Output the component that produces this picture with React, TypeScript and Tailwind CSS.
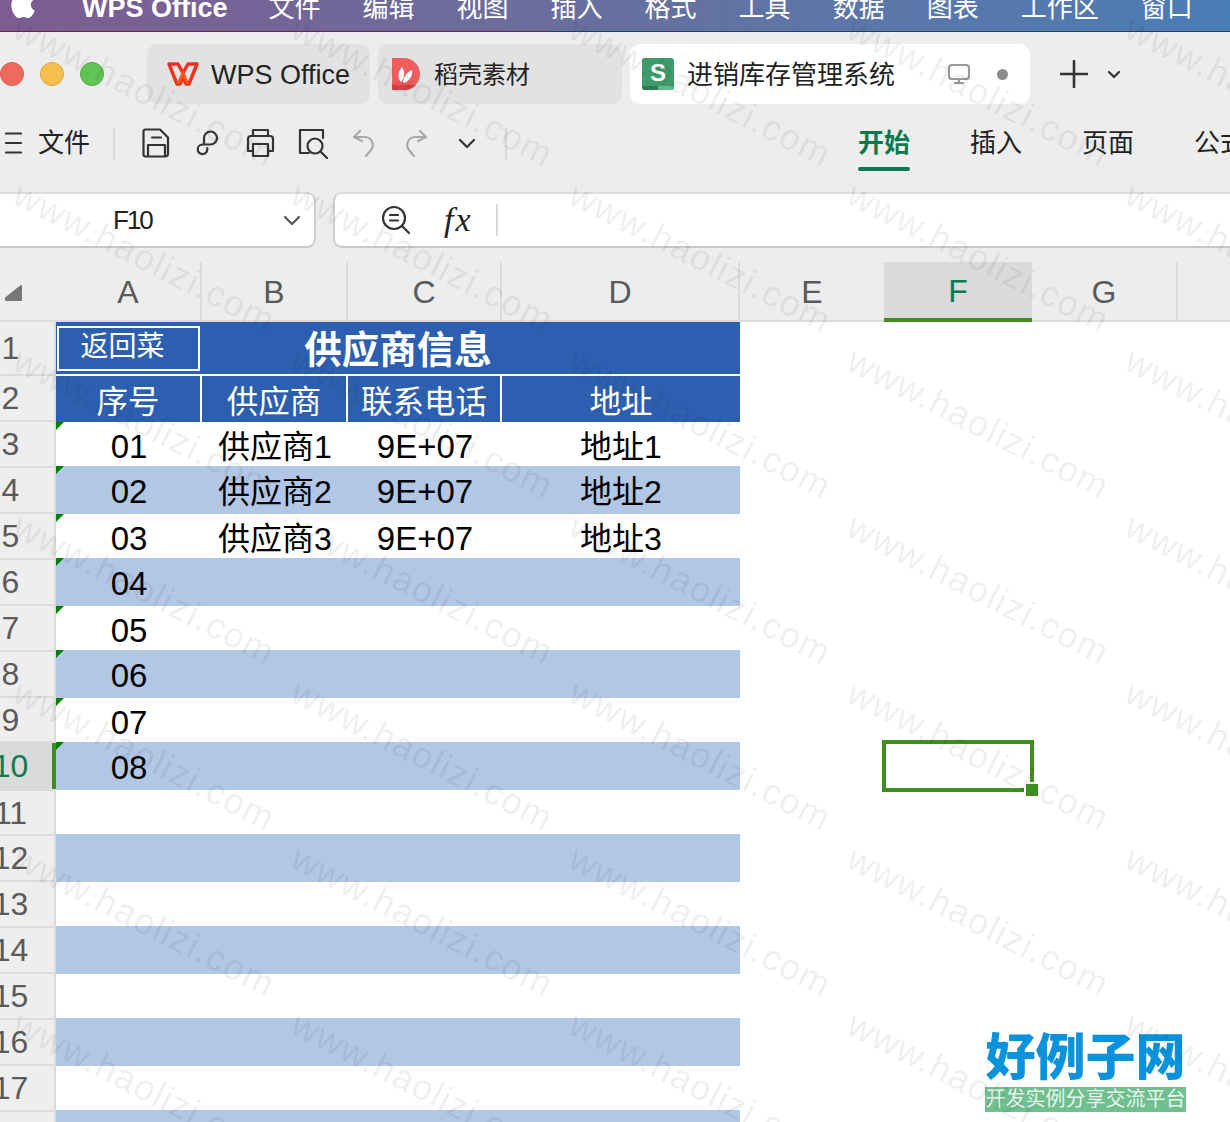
import React from 'react';
import { FaApple } from 'react-icons/fa';

const FONT = "font-['Liberation_Sans','Noto_Sans_CJK_SC',sans-serif]";

const MENUS = ['文件', '编辑', '视图', '插入', '格式', '工具', '数据', '图表', '工作区', '窗口'];

// column header cells: widths add up from x=56
const COLS = [
  { name: 'A', w: 146 },
  { name: 'B', w: 146 },
  { name: 'C', w: 154 },
  { name: 'D', w: 238 },
  { name: 'E', w: 144 },
  { name: 'F', w: 148 },
  { name: 'G', w: 146 },
  { name: '', w: 60 },
];

const ROW_HEADS = [
  { n: 1, h: 54 }, { n: 2, h: 46 }, { n: 3, h: 46 }, { n: 4, h: 46 }, { n: 5, h: 46 },
  { n: 6, h: 46 }, { n: 7, h: 46 }, { n: 8, h: 46 }, { n: 9, h: 45 }, { n: 10, h: 48 },
  { n: 11, h: 45 }, { n: 12, h: 46 }, { n: 13, h: 46 }, { n: 14, h: 46 }, { n: 15, h: 46 },
  { n: 16, h: 46 }, { n: 17, h: 46 }, { n: 18, h: 46 },
];

const DATA = [
  ['01', '供应商1', '9E+07', '地址1'],
  ['02', '供应商2', '9E+07', '地址2'],
  ['03', '供应商3', '9E+07', '地址3'],
  ['04', '', '', ''],
  ['05', '', '', ''],
  ['06', '', '', ''],
  ['07', '', '', ''],
  ['08', '', '', ''],
  ['', '', '', ''],
  ['', '', '', ''],
  ['', '', '', ''],
  ['', '', '', ''],
  ['', '', '', ''],
  ['', '', '', ''],
  ['', '', '', ''],
  ['', '', '', ''],
];

const WM_X = [24, 302, 580, 858, 1136];
const WM_Y = [10, 176, 342, 508, 674, 840, 1006];

function WpsLogo() {
  return (
    <svg width="32" height="24" viewBox="0 0 32 24" fill="none">
      <path d="M2 2h9l5 9 5-9h9l-8 20h-3l-3-7-3 7h-3L2 2Z" stroke="#f0301e" strokeWidth="3.4" strokeLinejoin="round" />
      <path d="M11 22l5-11 5 11" stroke="#f25a1a" strokeWidth="3" />
    </svg>
  );
}

function DaokeLogo() {
  return (
    <svg width="28" height="34" viewBox="0 0 28 34">
      <path d="M0 1h12a16 16 0 0 1 0 32H0Z" fill="#f05d5d" />
      <path d="M0 28h24a16 16 0 0 1-12 5H0Z" fill="#d93f40" />
      <path d="M9 25c-4-5-3-10 1-15 3 5 3 10-1 15Z" fill="#fff" />
      <path d="M11 26c0-6 4-11 9-13 1 6-3 12-9 13Z" fill="#fff" />
    </svg>
  );
}

function SheetLogo() {
  return (
    <div className="relative flex h-[32px] w-[32px] items-center justify-center overflow-hidden rounded-[3px] bg-[#3f9b6b]">
      <span className="pb-[3px] text-[24px] font-bold leading-none text-white">S</span>
      <div className="absolute bottom-0 left-0 h-[4px] w-[16px] bg-[#2f7c52]" />
      <div className="absolute bottom-0 right-0 h-[4px] w-[16px] bg-[#63b98a]" />
    </div>
  );
}

function ToolIcon({ w, h, color = '#333', children }: { w: number; h: number; color?: string; children: React.ReactNode }) {
  return (
    <svg width={w} height={h} viewBox={`0 0 ${w} ${h}`} fill="none" stroke={color} strokeWidth="2.2" strokeLinecap="round" strokeLinejoin="round">
      {children}
    </svg>
  );
}

function Toolbar() {
  return (
    <div className="mt-[15px] flex h-[52px] items-start">
      <div className="flex h-[48px] w-[858px] shrink-0 items-center">
        <div className="ml-[5px] w-[17px]">
          <ToolIcon w={17} h={22}>
            <path d="M1 1.5h15M1 11h15M1 20.5h15" />
          </ToolIcon>
        </div>
        <span className="ml-[16px] text-[26px] text-[#222]">文件</span>
        <div className="ml-[23px] h-[32px] w-[2px] bg-[#d8d8d8]" />
        <div className="ml-[27px]">
          <ToolIcon w={28} h={30}>
            <path d="M3 1.5h15l8 8V26a2.5 2.5 0 0 1-2.5 2.5h-20A2 2 0 0 1 1.5 26V3.5a2 2 0 0 1 1.5-2Z" />
            <path d="M10 9.5h9M6 28v-11h17v11" />
          </ToolIcon>
        </div>
        <div className="ml-[26px]">
          <ToolIcon w={25} h={26}>
            <path d="M8 13V8a6.5 6.5 0 1 1 6.5 6.5H6.5a4.8 4.8 0 1 0 0 9.6 4.8 4.8 0 0 0 4.8-4.8V18" />
          </ToolIcon>
        </div>
        <div className="ml-[25px]">
          <ToolIcon w={29} h={30}>
            <path d="M7 8V2h15v6M7 23H2V11a3 3 0 0 1 3-3h19a3 3 0 0 1 3 3v12h-5" />
            <path d="M7 16h15v12H7Z" />
          </ToolIcon>
        </div>
        <div className="ml-[23px]">
          <ToolIcon w={31} h={31}>
            <path d="M11 25H2V2h23v8" />
            <circle cx="17" cy="18" r="7.5" />
            <path d="M23 24l6 6" />
          </ToolIcon>
        </div>
        <div className="ml-[23px]">
          <ToolIcon w={24} h={28} color="#a9a9a9">
            <path d="M8 2 2 8l8 4M2 8h11a8 8 0 0 1 6 13l-5 6" />
          </ToolIcon>
        </div>
        <div className="ml-[28px]">
          <ToolIcon w={24} h={28} color="#a9a9a9">
            <path d="M16 2l6 6-8 4M22 8H11a8 8 0 0 0-6 13l5 6" />
          </ToolIcon>
        </div>
        <div className="ml-[30px]">
          <ToolIcon w={18} h={11}>
            <path d="M2 2l7 7 7-7" />
          </ToolIcon>
        </div>
        <div className="ml-[29px] h-[32px] w-[2px] bg-[#d8d8d8]" />
      </div>
      <div className="flex gap-[60px] whitespace-nowrap text-[26px] text-[#222]">
        <div className="flex w-[52px] flex-col">
          <span className="h-[48px] font-bold leading-[48px] text-[#0b7a4f]">开始</span>
          <div className="h-[4px] rounded-full bg-[#0b7a4f]" />
        </div>
        <span className="h-[48px] leading-[48px]">插入</span>
        <span className="h-[48px] leading-[48px]">页面</span>
        <span className="h-[48px] leading-[48px]">公式</span>
      </div>
    </div>
  );
}

function FormulaBar() {
  return (
    <div className="mt-[21px] flex h-[56px]">
      <div className="flex w-[316px] shrink-0 items-center rounded-r-[9px] border-y-2 border-r-2 border-t-[#dcdcdc] border-r-[#d0d0d0] border-b-[#c8c8c8] bg-white">
        <span className="ml-[113px] w-[40px] text-[26px] tracking-[-2px] text-[#222]">F10</span>
        <div className="ml-[130px]">
          <ToolIcon w={18} h={11} color="#555">
            <path d="M2 2l7 7 7-7" />
          </ToolIcon>
        </div>
      </div>
      <div className="ml-[17px] flex flex-1 items-center rounded-l-[9px] border-y-2 border-l-2 border-t-[#dcdcdc] border-l-[#d0d0d0] border-b-[#c8c8c8] bg-white">
        <div className="ml-[46px]">
          <ToolIcon w={30} h={30}>
            <circle cx="13" cy="13" r="11" />
            <path d="M9 10h8M9 15.5h8M21 21l7 7" />
          </ToolIcon>
        </div>
        <span className="ml-[33px] w-[52px] font-['Liberation_Serif',serif] text-[34px] italic leading-none tracking-[2px] text-[#222]">fx</span>
        <div className="h-[32px] w-[2px] bg-[#d8d8d8]" />
      </div>
    </div>
  );
}

function ColumnHeader() {
  return (
    <div className="mt-[14px] flex h-[60px] border-b-2 border-[#dcdcdc] text-[32px] text-[#5a5a5a]">
      <div className="flex w-[56px] shrink-0 items-end pb-[18px] pl-[4px]">
        <svg width="19" height="18" viewBox="0 0 19 18">
          <path d="M17 2 2 14v2h15Z" fill="#777" stroke="#777" strokeWidth="2" strokeLinejoin="round" />
        </svg>
      </div>
      {COLS.map(c => (
        <div
          key={c.name}
          style={{ width: c.w }}
          className={`-mb-[2px] flex shrink-0 items-center justify-center pt-[2px] ${c.name === 'F' ? 'border-b-4 border-[#3f8e1e] bg-[#dadada] text-[#0b7a4f]' : 'border-b-2 border-[#dcdcdc]'} ${c.name === 'E' || c.name === 'F' ? '' : 'border-r-2 border-r-[#dcdcdc]'}`}
        >
          {c.name}
        </div>
      ))}
    </div>
  );
}

function RowHeads() {
  return (
    <div className="-ml-[33px] flex w-[89px] shrink-0 flex-col border-r-2 border-[#dcdcdc] bg-[#eeeeee] text-[32px] text-[#5a5a5a]">
      {ROW_HEADS.map(r => (
        <div
          key={r.n}
          style={{ height: r.h }}
          className={`relative flex shrink-0 items-center justify-center border-b-2 ${r.n === 10 ? 'border-transparent bg-[#dadada] text-[#0b7a4f]' : 'border-[#dcdcdc]'}`}
        >
          {r.n}
          {r.n === 10 && <div className="absolute -right-[2px] top-0 h-full w-[4px] bg-[#3f8e1e]" />}
        </div>
      ))}
    </div>
  );
}

function Rows() {
  return (
    <div className="w-[684px] shrink-0 text-[32px] text-black">
      <div className="relative flex h-[52px] items-center justify-center bg-[#2d5fb0] pt-[5px] text-[37.5px] font-bold text-white">
        供应商信息
        <div className="absolute left-[1px] top-[4px] flex h-[45px] w-[143px] items-center justify-center border-2 border-white pb-[4px] pr-[12px] text-[28px] font-normal">
          返回菜
        </div>
      </div>
      <div className="mt-[2px] grid h-[46px] grid-cols-[146px_146px_154px_238px] bg-[#2d5fb0] text-[31.5px] text-white">
        {['序号', '供应商', '联系电话', '地址'].map((t, i) => (
          <div key={t} className={`flex items-center justify-center pt-[3px] ${i < 3 ? 'border-r-2 border-white' : ''}`}>
            {t}
          </div>
        ))}
      </div>
      {DATA.map((row, i) => (
        <div
          key={i}
          className={`relative grid grid-cols-[146px_146px_154px_238px] items-center ${i % 2 === 0 ? 'h-[44px] bg-white pt-[5px]' : 'h-[48px] bg-[#b2c6e6] pt-[3px]'}`}
        >
          {row.map((v, j) => (
            <div key={j} className={`text-center leading-none ${j === 0 || j === 2 ? 'text-[33px]' : ''}`}>{v}</div>
          ))}
          {row[0] && <div className="absolute left-0 top-0 h-[8px] w-[8px] bg-[#008000] [clip-path:polygon(0_0,100%_0,0_100%)]" />}
        </div>
      ))}
    </div>
  );
}

export default function App() {
  return (
    <div className={`relative h-[1122px] w-[1230px] overflow-hidden bg-[#ededed] ${FONT}`}>
      {/* mac menu bar, cut off at the top of the shot */}
      <div className="h-[32px] overflow-hidden bg-gradient-to-r from-[#7d5c92] via-[#66709f] to-[#497db5] text-white">
        <div className="flex h-[16px] items-center whitespace-nowrap text-[26px]">
          <FaApple className="ml-[8px] mb-[8px] h-[32px] w-[30px] shrink-0" />
          <span className="ml-[44px] text-[27px] font-bold">WPS Office</span>
          <div className="ml-[41px] flex gap-[42px]">
            {MENUS.map(m => <span key={m}>{m}</span>)}
          </div>
        </div>
        <div className="mt-[15px] h-[1px] bg-[linear-gradient(to_right,#7c1f40_548px,#21405f_548px)]" />
      </div>

      {/* window tabs */}
      <div className="mt-[12px] flex h-[60px] items-center">
        <div className="flex w-[104px] shrink-0 gap-[16px]">
          <div className="h-[24px] w-[24px] rounded-full border border-[#dc5a50] bg-[#ee6a5f]" />
          <div className="h-[24px] w-[24px] rounded-full border border-[#dba63c] bg-[#f5bf4f]" />
          <div className="h-[24px] w-[24px] rounded-full border border-[#4aa842] bg-[#61c554]" />
        </div>
        <div className="ml-[43px] flex h-full gap-[8px]">
          <div className="flex w-[223px] items-center gap-[12px] rounded-[10px] bg-[#e2e2e2] pl-[20px] text-[27px] text-[#222]">
            <WpsLogo />
            <span className="pt-[2px]">WPS Office</span>
          </div>
          <div className="flex w-[244px] items-center gap-[14px] rounded-[10px] bg-[#e2e2e2] pl-[14px] text-[24px] text-[#222]">
            <DaokeLogo />
            <span className="pt-[2px]">稻壳素材</span>
          </div>
          <div className="flex w-[400px] items-center rounded-[10px] bg-white pl-[12px] text-[26px] text-[#222]">
            <SheetLogo />
            <span className="ml-[13px] w-[261px] pt-[2px]">进销库存管理系统</span>
            <ToolIcon w={22} h={20} color="#999">
              <rect x="1" y="1" width="20" height="14" rx="3" />
              <path d="M7 19h8M11 15v4" />
            </ToolIcon>
            <div className="ml-[27px] h-[11px] w-[11px] rounded-full bg-[#8c8c8c]" />
          </div>
        </div>
        <div className="ml-[30px]">
          <ToolIcon w={28} h={28} color="#333">
            <path d="M14 1v26M1 14h26" strokeWidth="2.6" />
          </ToolIcon>
        </div>
        <div className="ml-[19px]">
          <ToolIcon w={14} h={9} color="#333">
            <path d="M2 2l5 5 5-5" />
          </ToolIcon>
        </div>
      </div>

      <Toolbar />
      <FormulaBar />
      <ColumnHeader />

      <div className="flex h-[800px] bg-white">
        <RowHeads />
        <Rows />
      </div>

      {/* selected cell F10 */}
      <div className="absolute left-[882px] top-[740px] h-[52px] w-[152px] border-4 border-[#3f8e1e]" />
      <div className="absolute left-[1024px] top-[782px] h-[16px] w-[16px] border-2 border-white bg-[#3f8e1e]" />

      {/* site logo stamped on the shot */}
      <div className="absolute left-[985px] top-[1029px] flex w-[201px] flex-col items-center">
        <div className="whitespace-nowrap text-[50px] font-black leading-[58px] text-[#0a93dc]">好例子网</div>
        <div className="h-[25px] w-full whitespace-nowrap bg-[#6fbf8f] text-center text-[20px] leading-[25px] text-[#e8f5ec]">开发实例分享交流平台</div>
      </div>

      {/* watermark */}
      {WM_Y.map(y =>
        WM_X.map(x => (
          <span
            key={`${x}-${y}`}
            style={{ left: x, top: y }}
            className="pointer-events-none absolute origin-top-left rotate-[27deg] whitespace-nowrap text-[36px] leading-none tracking-[1.5px] text-black/[0.08]"
          >
            www.haolizi.com
          </span>
        ))
      )}
    </div>
  );
}
